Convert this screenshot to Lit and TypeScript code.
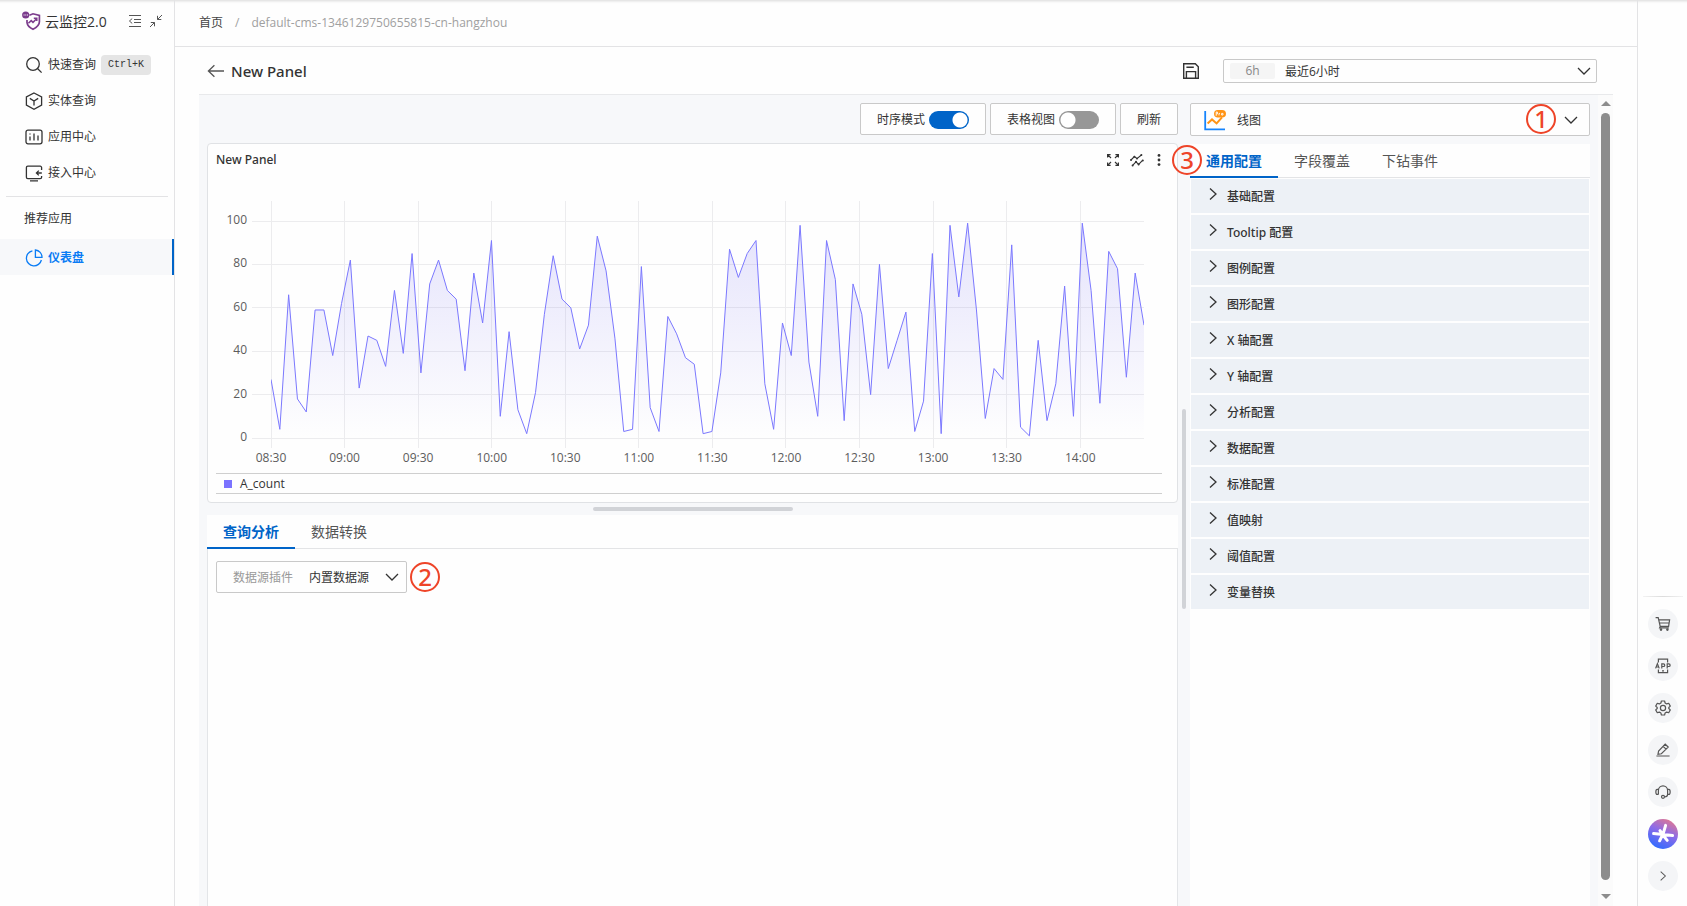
import { LitElement, html, svg, css, nothing, type TemplateResult } from "lit";
import { customElement, property, state } from "lit/decorators.js";
import { classMap } from "lit/directives/class-map.js";

const ICONS: Record<string, TemplateResult> = {
  search: svg`<circle cx="8" cy="8" r="6.3"/><path d="M12.5 12.5 16.6 16.6"/>`,
  cube: svg`<path d="M9 1 16.6 5v8L9 17.2 1.400 13V5Z"/><path d="m4.800 6.400 4.200 2.600 4.200-2.600M9 9v4.600"/>`,
  bars: svg`<rect x="1" y="2.2" width="16" height="13.6" rx="2"/><path d="M5 8.4v4M9 5.6v6.8M13 7.6v4.8M5 5.6v1"/>`,
  access: svg`<path d="M16.6 6V3.6a1.4 1.4 0 0 0-1.4-1.4H2.8a1.4 1.4 0 0 0-1.4 1.4v9.600a1.400 1.400 0 0 0 1.400 1.400h12.400a1.400 1.400 0 0 0 1.400-1.400V12M16.800 9h-5.400M13.800 6.600 11.400 9l2.400 2.400M5 16.800h8"/>`,
  pie: svg`<path d="M7.4 1.8A7.6 7.6 0 1 0 16.4 11M10.4 1v7.4H17A7.2 7.2 0 0 0 10.4 1Z"/>`,
  back: svg`<path d="M17 9H1.5M7.4 3.2 1.4 9l6 5.8"/>`,
  down: svg`<path d="m3 6 6 6 6-6"/>`,
  right: svg`<path d="m6 3.4 6 5.6-6 5.6"/>`,
};

@customElement("ui-icon")
class UiIcon extends LitElement {
  static styles = css`
    :host { display: inline-flex; flex: none; }
    .glyph { display: block; fill: none; stroke: currentColor; stroke-width: 1.3; }
  `;
  @property() name = "";
  @property({ type: Number }) size = 18;
  render() {
    return html`<svg class="glyph" width=${this.size} height=${this.size} viewBox="0 0 18 18" aria-hidden="true">${ICONS[this.name] ?? nothing}</svg>`;
  }
}

const SERIES = [
  27, 4, 66, 18, 12, 59, 59, 38, 62, 82, 23, 47, 45, 33, 68, 39, 85, 30, 71, 82,
  68, 64, 31, 76, 53, 91, 10, 49, 13, 2, 21, 57, 84, 64, 60, 41, 52, 93, 77, 46,
  3, 4, 79, 14, 3, 56, 48, 37, 34, 2, 3, 30, 87, 74, 85, 91, 25, 4, 53, 38,
  98, 35, 10, 91, 73, 8, 71, 57, 20, 80, 32, 45, 58, 3, 17, 85, 2, 98, 65, 99,
  59, 9, 32, 27, 89, 5, 1, 45, 8, 25, 70, 10, 99, 68, 16, 86, 78, 28, 76, 52,
];
const TIMES = ["08:30", "09:00", "09:30", "10:00", "10:30", "11:00", "11:30", "12:00", "12:30", "13:00", "13:30", "14:00"];
const LEVELS = [100, 80, 60, 40, 20, 0];
const MINUTES = 356;

@customElement("line-chart")
class LineChart extends LitElement {
  static styles = css`
    :host { display: block; padding: 0 18px 0 55px; }
    .plot { display: block; width: 100%; height: 270px; overflow: visible; }
    .grid { stroke: #ececee; shape-rendering: crispEdges; }
    .tick { fill: #5c5c5c; font-size: 12px; }
    .line { fill: none; stroke: #7b78ff; stroke-width: 1; vector-effect: non-scaling-stroke; }
  `;
  render() {
    const y = (v: number) => 237 - v * 2.17;
    const pts = SERIES.map((v, i) => `${i},${y(v)}`).join(" ");
    return html`<svg class="plot" role="img" aria-label="A_count">
      <defs><linearGradient id="fade" x1="0" y1="0" x2="0" y2="1">
        <stop offset="0" stop-color="#6a60f0" stop-opacity=".17"/><stop offset="1" stop-color="#6a60f0" stop-opacity="0"/>
      </linearGradient></defs>
      ${LEVELS.map((v) => svg`<line class="grid" x1="-19" x2="100%" y1=${y(v)} y2=${y(v)}></line>
        <text class="tick" x="-24" y=${y(v) + 3} text-anchor="end">${v}</text>`)}
      ${TIMES.map((t, i) => {
        const x = `${(i * 3000) / MINUTES}%`;
        return svg`<line class="grid" x1=${x} x2=${x} y1="0" y2="247"></line>
          <text class="tick" x=${x} y="261" text-anchor="middle">${t}</text>`;
      })}
      <svg width="100%" height="240" viewBox="0 0 99 240" preserveAspectRatio="none">
        <polygon fill="url(#fade)" points="0,237 ${pts} 99,237"></polygon>
        <polyline class="line" points=${pts}></polyline>
      </svg>
    </svg>`;
  }
}

const SECTIONS = ["基础配置", "Tooltip 配置", "图例配置", "图形配置", "X 轴配置", "Y 轴配置", "分析配置", "数据配置", "标准配置", "值映射", "阈值配置", "变量替换"];
const NAV = [
  { icon: "search", text: "快速查询", key: "Ctrl+K" },
  { icon: "cube", text: "实体查询" },
  { icon: "bars", text: "应用中心" },
  { icon: "access", text: "接入中心" },
];
const TOOLS: { label: string; art: TemplateResult }[] = [
  { label: "购物车", art: svg`<path d="M.600 1.600h2.600l2 8.800h8.400l1-6.600H3.800M4.400 7h9.800M5.200 10.400l-.6 1.400h9.200"/><circle cx="6" cy="13.600" r=".7"/><circle cx="12.400" cy="13.600" r=".7"/>` },
  { label: "App", art: svg`<path d="M3.400 4.400V1.200h9.200v3.200M3.400 11.400v3.200h9.200v-3.200M7 12.800h2M.6 10.4 2.4 5.6l1.8 4.8M1.2 9h2.4M6.8 10.6V5.8h1.6a1.3 1.3 0 0 1 0 2.7H6.8M12.2 10.6V5.8h1.6a1.3 1.3 0 0 1 0 2.7h-1.6"/>` },
  { label: "设置", art: svg`<path d="m6.400 1-.5 2-1.600.9-2-.6-1.600 2.800L2.200 7.500v1L.700 9.900l1.600 2.800 2-.6 1.600.9.500 2h3.200l.5-2 1.600-.9 2 .6 1.600-2.800-1.500-1.400v-1l1.500-1.400-1.600-2.800-2 .6-1.600-.9-.5-2Z" stroke-linejoin="round"/><circle cx="8" cy="8" r="2.600"/>` },
  { label: "编辑", art: svg`<path d="M3 12.200 3.600 9l6.600-6.800 3 2.900-6.800 6.700-3.400.4ZM8.200 4.400l2.800 2.800M1.400 14h13.200"/>` },
  { label: "客服", art: svg`<path d="M3.400 10.400V6.400a4.600 4.600 0 0 1 9.200 0v4c0 1.600-1.400 2.400-3 2.600M3.400 5.400H2.200C.4 5.400.4 10.400 2.200 10.400h1.200M12.600 5.400h1.200c1.800 0 1.800 5 0 5h-1.200"/><circle cx="8" cy="12.800" r="1.500"/>` },
];

@customElement("app-root")
class AppRoot extends LitElement {
  static styles = css`
    :host { display: block; font: 12px/18px "Open Sans", "Noto Sans CJK SC", sans-serif; color: #333; }
    * { box-sizing: border-box; }
    button, select, input { font: inherit; color: inherit; margin: 0; }
    button { background: none; border: 0; padding: 0; }
    a { color: inherit; text-decoration: none; }
    select { appearance: none; border: 0; background: none; padding: 2px 0 0; outline: 0; min-width: 0; }
    .shell { display: flex; height: 100vh; overflow: hidden; background: #fefefe; box-shadow: inset 0 4px 3px -3px #d8d8d8; }

    .side { width: 175px; flex: none; border-right: 1px solid #e3e3e5; }
    .brand { display: flex; align-items: center; height: 42px; padding: 0 11px 0 22px; }
    .brand-name { font-size: 14px; margin: 2px auto 0 3px; }
    .brand-tools { display: flex; gap: 7px; }
    .icon-btn { display: inline-flex; color: #555; }
    .nav-item { display: flex; align-items: center; height: 36px; padding: 1px 0 0 25px; gap: 5px; }
    .kbd { font: 10px/20px "Liberation Mono", monospace; background: #e5e5e5; border-radius: 4px; padding: 0 7px; }
    .nav { padding-top: 4px; }
    .rule { height: 1px; border: 0; background: #e3e3e5; margin: 6px 6px 0; }
    .group { padding: 13px 24px 11px; }
    .active { color: #0a7cf5; font-weight: 600; background: #f7f8fa; border-right: 2px solid #0064c8; }

    .main { flex: 1; min-width: 0; display: flex; flex-direction: column; }
    .crumbs { display: flex; align-items: center; gap: 12px; height: 47px; padding: 0 24px 1px; border-bottom: 1px solid #e3e3e5; color: #a0a0a0; }
    .crumb-link { color: #444; }
    .title-bar { display: flex; align-items: center; height: 48px; margin: 0 24px; padding: 0 16px 0 8px; border-bottom: 1px solid #e8e9eb; }
    .title { font: 500 15px/20px "Noto Sans", sans-serif; margin: 0 auto 0 6px; }
    .field { display: flex; align-items: center; border: 1px solid #c9c9c9; border-radius: 2px; background: #fefefe; position: relative; }
    .field select { flex: 1; align-self: stretch; }
    .field ui-icon { pointer-events: none; }
    .time { width: 374px; height: 24px; padding: 0 3px 0 6px; margin-left: 24px; }
    .chip { width: 45px; margin-right: 10px; line-height: 16px; background: #f5f5f5; color: #888; text-align: center; border-radius: 2px; }

    .work { flex: 1; min-height: 0; display: flex; margin: 0 24px; background: #f7f8fa; }
    .left { flex: 1; min-width: 0; display: flex; flex-direction: column; padding: 8px 0 0 8px; }
    .toolbar { display: flex; justify-content: flex-end; gap: 4px; }
    .tool { display: flex; align-items: center; gap: 4px; height: 32px; padding: 1px 16px 0; background: #fefefe; border: 1px solid #c9c9c9; border-radius: 2px; }
    .switch { appearance: none; width: 40px; height: 18px; border-radius: 9px; background: radial-gradient(circle at 9px 9px, #fff 7px, #979797 8px); }
    .switch:checked { background: radial-gradient(circle at 31px 9px, #fff 7px, #0064c8 8px); }
    .panel { margin-top: 8px; height: 360px; background: #fefefe; border: 1px solid #e0e2e5; border-radius: 4px; padding: 0 8px; }
    .panel-head { display: flex; align-items: center; justify-content: space-between; height: 32px; padding-right: 4px; }
    .panel-title { font: 500 12px/18px "Noto Sans", sans-serif; margin: 0; }
    .panel-tools { display: flex; gap: 8px; }
    .panel-body { padding: 25px 7px 0 0; }
    .legend { display: flex; align-items: center; gap: 8px; height: 21px; margin: 2px 7px 0 0; padding-left: 8px; border: 1px solid #cfcfcf; border-width: 1px 0; }
    .swatch { width: 8px; height: 8px; background: #7b73ff; }
    .drag-x { align-self: center; width: 200px; height: 4px; margin: 4px 0; border-radius: 2px; background: #d1d3d7; }
    .drag-y { align-self: center; width: 4px; height: 200px; margin: 16px 4px 0; border-radius: 2px; background: #d1d3d7; }
    .query { flex: 1; display: flex; flex-direction: column; }
    .query-body { flex: 1; background: #fefefe; border: 1px solid #e3e5e8; border-width: 0 1px; }
    .tabs { display: flex; height: 34px; border-bottom: 1px solid #e3e4e6; background: #fefefe; }
    .tab { height: 34px; padding: 2px 16px 0; font-size: 14px; color: #555; border-bottom: 2px solid transparent; }
    .on { color: #0064c8; font-weight: 600; border-color: #0064c8; }
    .source-row { display: flex; align-items: center; gap: 3px; padding: 12px 8px; }
    .source { width: 191px; height: 32px; padding: 0 5px 0 16px; gap: 12px; }
    .source select { margin-left: 4px; }
    .source-label { color: #999; padding-top: 2px; }
    .mark { width: 30px; height: 30px; flex: none; border: 2px solid #ee4428; border-radius: 50%; color: #ee4428; font: 500 24px/26px "Noto Sans", sans-serif; text-align: center; }

    .right { width: 400px; flex: none; display: flex; flex-direction: column; padding-top: 8px; }
    .kind { height: 33px; padding: 0 9px 0 13px; }
    .kind select { margin-left: 11px; }
    .kind .mark { margin: 0 6px 2px 0; }
    .config { position: relative; flex: 1; margin-top: 8px; background: #fefefe; }
    .config > .mark { position: absolute; left: -18px; top: 1px; }
    .sections { display: grid; gap: 2px; padding: 1px 1px 0; }
    .section { display: flex; align-items: center; height: 34px; gap: 5px; padding: 2px 13px 0; font-family: "Noto Sans", "Noto Sans CJK SC", sans-serif; font-weight: 500; background: #edf1f6; }
    .section ui-icon { margin-bottom: 6px; }

    .scroll { display: flex; flex-direction: column; align-items: center; width: 15px; margin-left: 8px; padding: 6px 0 7px; background: #fbfbfb; }
    .thumb { flex: 1; width: 9px; margin: 7px 0 14px; border-radius: 5px; background: #8c8c8c; }

    .rail { width: 50px; flex: none; display: flex; flex-direction: column; align-items: center; justify-content: flex-end; gap: 12px; padding-bottom: 15px; border-left: 1px solid #e3e3e5; }
    .rail-rule { width: 40px; height: 1px; background: linear-gradient(90deg, #f2f2f2, #dcdcdc, #f2f2f2); }
    .round { display: grid; place-items: center; width: 30px; height: 30px; border-radius: 50%; background: #f4f5f7; color: #555; }
    .art { display: block; fill: none; stroke: currentColor; stroke-width: 1.2; }
    .ai { background: linear-gradient(205deg, #e8788a 5%, #8c6be8 45%, #2f6bff 90%); color: #fff; }
  `;

  @state() private timeline = true;
  @state() private table = false;
  @state() private tab = 0;
  @state() private configTab = 0;

  private mark(n: number) {
    return html`<span class="mark">${n}</span>`;
  }

  private tabs(names: string[], current: number, pick: (i: number) => void) {
    return html`<div class="tabs" role="tablist">${names.map((n, i) => html`
      <button class=${classMap({ tab: true, on: i === current })} role="tab" aria-selected=${i === current} @click=${() => pick(i)}>${n}</button>`)}</div>`;
  }

  private sidebar() {
    return html`<aside class="side">
      <div class="brand">
        <svg width="20" height="20" viewBox="0 0 20 20" aria-hidden="true">
          <path d="M7.400 4.200 11 2.800l6.400 1.600v6.400c0 3.200-2.600 5.600-6.400 7.400-3.600-1.600-5.600-3.800-6-6.600V9" fill="none" stroke="#7b3c8c" stroke-width="1.700"/>
          <path d="m6.400 12.200 2.800-2.600 1.800 1.800 3.600-3.600M11.800 7.200h3V10" fill="none" stroke="#7b3c8c" stroke-width="1.500"/>
          <circle cx="3.700" cy="4" r="3.600" fill="#7b3c8c"/><path d="M1.600 4h1M3.300 4h1M5 4h1" stroke="#fff"/>
        </svg>
        <span class="brand-name">云监控2.0</span>
        <span class="brand-tools">
          <button class="icon-btn" aria-label="收起菜单"><svg width="14" height="14" viewBox="0 0 14 14" fill="none" stroke="currentColor"><path d="M1 1.500h12M6 5.500h7M6 8.500h7M1 12.500h12M4.200 4.600 1.400 7l2.800 2.400"/></svg></button>
          <button class="icon-btn" aria-label="缩小"><svg width="14" height="14" viewBox="0 0 14 14" fill="none" stroke="currentColor"><path d="M13 1 8.600 5.400M8.500 1.800v3.700h3.800M1 13l4.400-4.400M1.800 8.500h3.700v3.800"/></svg></button>
        </span>
      </div>
      <nav class="nav">
        ${NAV.map((n) => html`<a class="nav-item" href="#"><ui-icon name=${n.icon}></ui-icon>${n.text}${n.key ? html`<span class="kbd">${n.key}</span>` : nothing}</a>`)}
        <hr class="rule" />
        <div class="group">推荐应用</div>
        <a class="nav-item active" href="#"><ui-icon name="pie"></ui-icon>仪表盘</a>
      </nav>
    </aside>`;
  }

  private chartPanel() {
    return html`<section class="panel">
      <div class="panel-head">
        <h2 class="panel-title">New Panel</h2>
        <div class="panel-tools">
          <button class="icon-btn" aria-label="全屏"><svg width="16" height="16" viewBox="0 0 16 16" fill="none" stroke="#333" stroke-width="1.200"><path d="M6 6 2.800 2.800M2.600 5.600v-3h3M10 6l3.200-3.200M10.400 2.600h3v3M6 10l-3.200 3.200M2.600 10.400v3h3M10 10l3.200 3.200M13.400 10.400v3h-3"/></svg></button>
          <button class="icon-btn" aria-label="分析"><svg width="16" height="16" viewBox="0 0 16 16" fill="none" stroke="#333" stroke-width="1.100"><path d="m2 8 3.400-3.400 2.600 2L12.400 3M3.600 13.400 7 9.800l2.600 2.600 4.200-4.200"/><g fill="#333" stroke="none"><circle cx="2" cy="8" r="1"/><circle cx="5.400" cy="4.800" r="1"/><circle cx="8" cy="6.600" r="1"/><circle cx="12.400" cy="3" r="1"/><circle cx="3.600" cy="13.400" r="1"/><circle cx="7" cy="9.800" r="1"/><circle cx="9.600" cy="12.400" r="1"/><circle cx="13.800" cy="8.400" r="1"/></g></svg></button>
          <button class="icon-btn" aria-label="更多"><svg width="12" height="16" viewBox="0 0 12 16" fill="#333"><circle cx="6" cy="3.400" r="1.400"/><circle cx="6" cy="8" r="1.400"/><circle cx="6" cy="12.600" r="1.400"/></svg></button>
        </div>
      </div>
      <div class="panel-body"><line-chart></line-chart></div>
      <div class="legend"><span class="swatch"></span>A_count</div>
    </section>`;
  }

  render() {
    return html`<div class="shell">
      ${this.sidebar()}
      <main class="main">
        <nav class="crumbs"><a class="crumb-link" href="#">首页</a><span>/</span><span>default-cms-1346129750655815-cn-hangzhou</span></nav>
        <header class="title-bar">
          <button class="icon-btn" aria-label="返回"><ui-icon name="back"></ui-icon></button>
          <h1 class="title">New Panel</h1>
          <button class="icon-btn" aria-label="保存"><svg width="16" height="16" viewBox="0 0 16 16" fill="none" stroke="#333" stroke-width="1.400"><path d="M.7.700h11.600l3 3v11.600H.7ZM3.400 15V8.600h9.200V15M3.400 4.200h7.400"/></svg></button>
          <label class="field time"><span class="chip">6h</span><select aria-label="时间范围"><option>最近6小时</option></select><ui-icon name="down"></ui-icon></label>
        </header>
        <div class="work">
          <div class="left">
            <div class="toolbar">
              <label class="tool">时序模式<input class="switch" type="checkbox" .checked=${this.timeline} @change=${() => (this.timeline = !this.timeline)} /></label>
              <label class="tool">表格视图<input class="switch" type="checkbox" .checked=${this.table} @change=${() => (this.table = !this.table)} /></label>
              <button class="tool">刷新</button>
            </div>
            ${this.chartPanel()}
            <div class="drag-x"></div>
            <section class="query">
              ${this.tabs(["查询分析", "数据转换"], this.tab, (i) => (this.tab = i))}
              <div class="query-body">
                <div class="source-row">
                  <label class="field source"><span class="source-label">数据源插件</span><select><option>内置数据源</option></select><ui-icon name="down"></ui-icon></label>
                  ${this.mark(2)}
                </div>
              </div>
            </section>
          </div>
          <div class="drag-y"></div>
          <div class="right">
            <label class="field kind">
              <svg width="22" height="22" viewBox="0 0 22 22" fill="none" aria-hidden="true"><path d="M1.200 2v18.300H21" stroke="#1684fc" stroke-width="1.800"/><path d="m3.600 14.400 4.400-4 4.600 4 5.400-6" stroke="#ff9416" stroke-width="2"/><rect x="10" y="1" width="12" height="7.600" rx="3.800" fill="#ff9416"/><path d="M12.200 6.800V3h1.200v2h-1M15 6.400V4.400h1M17.600 4.400h1.400v1.600h-1.400Z" stroke="#fff" stroke-width=".9"/></svg>
              <select aria-label="图表类型"><option>线图</option></select>${this.mark(1)}<ui-icon name="down"></ui-icon>
            </label>
            <section class="config">
              ${this.tabs(["通用配置", "字段覆盖", "下钻事件"], this.configTab, (i) => (this.configTab = i))}
              <div class="sections">${SECTIONS.map((s) => html`<button class="section" aria-expanded="false"><ui-icon name="right"></ui-icon>${s}</button>`)}</div>
              ${this.mark(3)}
            </section>
          </div>
          <div class="scroll" aria-hidden="true">
            <svg width="10" height="5" viewBox="0 0 10 5" fill="#8c8c8c"><path d="M0 5 5 0l5 5Z"/></svg>
            <span class="thumb"></span>
            <svg width="10" height="5" viewBox="0 0 10 5" fill="#8c8c8c"><path d="m0 0 5 5 5-5Z"/></svg>
          </div>
        </div>
      </main>
      <aside class="rail">
        <div class="rail-rule"></div>
        ${TOOLS.map((t) => html`<button class="round" aria-label=${t.label}><svg class="art" width="16" height="16" viewBox="0 0 16 16">${t.art}</svg></button>`)}
        <button class="round ai" aria-label="AI 助手"><svg width="24" height="24" viewBox="0 0 24 24" fill="none" stroke="#fff" stroke-width="3" stroke-linecap="round"><path d="M14.600 3.400 12 12.400M2.600 11.600l19 2M8.600 18.800l3-6 4.600 5.600M9 8.600l3 4"/></svg></button>
        <button class="round" aria-label="展开"><ui-icon name="right" size="14"></ui-icon></button>
      </aside>
    </div>`;
  }
}
